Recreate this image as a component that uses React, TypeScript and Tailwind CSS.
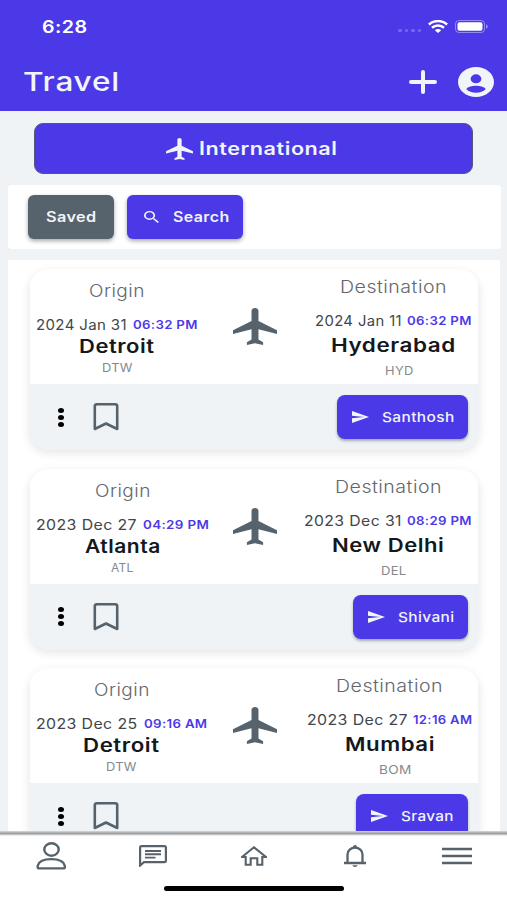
import React, { useLayoutEffect, useRef, useState } from "react";

interface Stop {
  label: string;
  labelWidth: number;
  date: string;
  dateWidth: number;
  time: string;
  timeWidth: number;
  city: string;
  cityWidth: number;
  code: string;
  codeWidth: number;
}

interface Trip {
  id: number;
  origin: Stop;
  destination: Stop;
  traveler: string;
  travelerWidth: number;
}

const trips: Trip[] = [
  {
    id: 1,
    origin: {
      label: "Origin",
      labelWidth: 56,
      date: "2024 Jan 31",
      dateWidth: 91,
      time: "06:32 PM",
      timeWidth: 65,
      city: "Detroit",
      cityWidth: 76,
      code: "DTW",
      codeWidth: 31,
    },
    destination: {
      label: "Destination",
      labelWidth: 107,
      date: "2024 Jan 11",
      dateWidth: 87,
      time: "06:32 PM",
      timeWidth: 65,
      city: "Hyderabad",
      cityWidth: 125,
      code: "HYD",
      codeWidth: 29,
    },
    traveler: "Santhosh",
    travelerWidth: 72,
  },
  {
    id: 2,
    origin: {
      label: "Origin",
      labelWidth: 56,
      date: "2023 Dec 27",
      dateWidth: 101,
      time: "04:29 PM",
      timeWidth: 66,
      city: "Atlanta",
      cityWidth: 76,
      code: "ATL",
      codeWidth: 23,
    },
    destination: {
      label: "Destination",
      labelWidth: 107,
      date: "2023 Dec 31",
      dateWidth: 98,
      time: "08:29 PM",
      timeWidth: 65,
      city: "New Delhi",
      cityWidth: 112,
      code: "DEL",
      codeWidth: 26,
    },
    traveler: "Shivani",
    travelerWidth: 56,
  },
  {
    id: 3,
    origin: {
      label: "Origin",
      labelWidth: 56,
      date: "2023 Dec 25",
      dateWidth: 102,
      time: "09:16 AM",
      timeWidth: 63,
      city: "Detroit",
      cityWidth: 77,
      code: "DTW",
      codeWidth: 31,
    },
    destination: {
      label: "Destination",
      labelWidth: 107,
      date: "2023 Dec 27",
      dateWidth: 101,
      time: "12:16 AM",
      timeWidth: 59,
      city: "Mumbai",
      cityWidth: 90,
      code: "BOM",
      codeWidth: 33,
    },
    traveler: "Sravan",
    travelerWidth: 53,
  },
];

// Stretches a line of text horizontally so it fills the given width
function WideText({
  width,
  className = "",
  children,
}: {
  width: number;
  className?: string;
  children: string;
}) {
  const ref = useRef<HTMLSpanElement>(null);
  const [scale, setScale] = useState(1);

  useLayoutEffect(() => {
    if (ref.current) setScale(width / ref.current.offsetWidth);
  }, [width, children]);

  return (
    <span
      className={`block shrink-0 whitespace-nowrap text-left tracking-wide ${className}`}
      style={{ width }}
    >
      <span
        ref={ref}
        className="inline-block origin-left"
        style={{ transform: `scaleX(${scale})` }}
      >
        {children}
      </span>
    </span>
  );
}

function PlaneIcon({ className }: { className: string }) {
  return (
    <svg viewBox="2 2 19 20" preserveAspectRatio="none" fill="currentColor" className={className}>
      <path d="M21 16v-2l-8-5V3.500c0-.83-.67-1.500-1.500-1.500S10 2.670 10 3.500V9l-8 5v2l8-2.500V19l-2 1.500V22l3.500-1 3.500 1v-1.500L13 19v-5.500l8 2.500z" />
    </svg>
  );
}

function StatusBar() {
  return (
    <div className="flex h-[52px] items-center pl-[42px] pr-[19px] text-white">
      <WideText width={45} className="pt-px text-[17px] font-semibold leading-[52px]">
        6:28
      </WideText>
      <div className="ml-auto flex items-center">
        <div className="mr-[7px] mt-[9px] flex gap-[3px]">
          {[0, 1, 2, 3].map((n) => (
            <span key={n} className="h-[3px] w-[3.5px] rounded-full bg-white/25" />
          ))}
        </div>
        <svg
          viewBox="0 0 20 13"
          className="mr-[7px] h-[13px] w-[20px]"
          fill="none"
          stroke="currentColor"
          strokeWidth="2.5"
        >
          <path d="M.9 4.500C6-.1 14-.1 19.100 4.500" />
          <path d="M4 7.800c3.500-3 8.500-3 12 0" />
          <path d="M6.800 10.200C8.600 8.600 11.400 8.600 13.200 10.200L10 13Z" fill="currentColor" stroke="none" />
        </svg>
        <svg viewBox="0 0 33 13" className="h-[13px] w-[33px]">
          <rect x=".5" y=".5" width="29" height="12" rx="3.500" fill="none" stroke="white" strokeOpacity=".4" />
          <rect x="2.500" y="2.200" width="25" height="8.600" rx="2" fill="white" />
          <path d="M31 4.300c2.300.8 2.300 3.600 0 4.400z" fill="white" fillOpacity=".45" />
        </svg>
      </div>
    </div>
  );
}

function Header() {
  return (
    <header className="h-[111px] shrink-0 bg-[#4b39e8]">
      <StatusBar />
      <div className="flex h-[59px] items-center pl-[23px] pr-[13px] text-[#f1f4f8]">
        <WideText width={97} className="text-[26px] font-medium leading-[59px]">
          Travel
        </WideText>
        <svg
          viewBox="0 0 28 24"
          className="ml-auto mr-[21px] h-6 w-7"
          stroke="currentColor"
          strokeWidth="4"
          strokeLinecap="round"
        >
          <path d="M2 12h24M14 2v20" />
        </svg>
        <svg viewBox="2 2 20 20" preserveAspectRatio="none" fill="currentColor" className="h-[30px] w-9">
          <path d="M12 2C6.480 2 2 6.480 2 12s4.480 10 10 10 10-4.480 10-10S17.520 2 12 2zm0 4.900a3 3 0 1 1 0 6 3 3 0 0 1 0-6zm0 12.300c-2.300 0-4.200-.8-5.300-2.300-.1-1.500 3.200-2.400 5.300-2.400s5.400.9 5.300 2.400c-1.100 1.500-3 2.300-5.300 2.300z" />
        </svg>
      </div>
    </header>
  );
}

function StopColumn({ stop, right = false }: { stop: Stop; right?: boolean }) {
  return (
    <div className={`flex flex-col items-center ${right ? "pt-[8px]" : "pt-[12px]"}`}>
      <WideText width={stop.labelWidth} className="text-[17px] font-light leading-5 text-[#62686d]">
        {stop.label}
      </WideText>
      <div className={`mt-[14px] flex ${right ? "gap-[5px]" : "gap-[6px]"}`}>
        <WideText width={stop.dateWidth} className="text-[14px] leading-5 text-[#42464a]">
          {stop.date}
        </WideText>
        <WideText width={stop.timeWidth} className="text-[12px] font-semibold leading-5 text-[#4b39e8]">
          {stop.time}
        </WideText>
      </div>
      <WideText
        width={stop.cityWidth}
        className={`text-[18.500px] font-semibold leading-[22px] text-[#14181b] ${right ? "mt-[3px]" : ""}`}
      >
        {stop.city}
      </WideText>
      <WideText
        width={stop.codeWidth}
        className={`text-[12px] leading-4 text-[#85898d] ${right ? "ml-[11px] mt-[7px]" : "mt-[3px]"}`}
      >
        {stop.code}
      </WideText>
    </div>
  );
}

function TripCard({ trip }: { trip: Trip }) {
  return (
    <article className="h-[181px] shrink-0 overflow-hidden rounded-[20px] bg-[#eff3f6] shadow-[0_3px_10px_rgba(0,0,0,0.1)]">
      <div className="mx-px flex h-[115px] justify-between bg-white pl-[6px] pr-[6px]">
        <StopColumn stop={trip.origin} />
        <StopColumn stop={trip.destination} right />
      </div>
      <div className="flex h-[66px] items-center pl-[29px] pr-[11px]">
        <div className="flex flex-col gap-[2px]">
          {[0, 1, 2].map((n) => (
            <span key={n} className="h-[5px] w-[6px] rounded-[50%] bg-black" />
          ))}
        </div>
        <svg
          viewBox="0 0 26 28"
          className="ml-[29px] h-7 w-[26px]"
          fill="none"
          stroke="#57636c"
          strokeWidth="2.600"
          strokeLinejoin="round"
        >
          <path d="M1.800 26V3q0-1.700 2-1.700h18.400q2 0 2 1.700v23L13 20.500z" />
        </svg>
        <button className="ml-auto flex h-11 items-center rounded-lg bg-[#4b39e8] pl-[15px] pr-[14px] text-[#f1f4f8] shadow-[0_2px_3px_rgba(0,0,0,0.3)]">
          <svg viewBox="2 3 21 18" preserveAspectRatio="none" fill="currentColor" className="mr-[13px] h-3 w-[17px]">
            <path d="M2.010 21L23 12 2.010 3 2 10l15 2-15 2z" />
          </svg>
          <WideText width={trip.travelerWidth} className="text-[13.500px] font-medium leading-5">
            {trip.traveler}
          </WideText>
        </button>
      </div>
    </article>
  );
}

function BottomNav() {
  return (
    <nav className="flex h-[69px] shrink-0 flex-col bg-white">
      <div className="h-[5px] shrink-0 bg-linear-to-b from-[#d8dbde] via-[#9a9da0] to-white" />
      <div className="flex h-[40px] items-center justify-between pl-[36px] pr-[35px] text-[#57636c]">
        <svg viewBox="0 0 30 28" className="h-7 w-[30px]" fill="none" stroke="currentColor" strokeWidth="2.400">
          <ellipse cx="15.500" cy="7.500" rx="7.200" ry="6.200" />
          <path d="M1.700 25.200v-1.500c1-4.700 7-6.600 13.600-6.600s12.500 1.900 13.500 6.600v1.500q0 1.200-1.500 1.200H3.200q-1.500 0-1.500-1.200z" />
        </svg>
        <svg viewBox="0 0 28 22" className="-ml-[2px] mr-[2px] h-[22px] w-7" fill="none" stroke="currentColor" strokeWidth="2.200">
          <path d="M1.100 20.500V2.300q0-1.100 1.500-1.100h22.800q1.500 0 1.500 1.100v13.800q0 1.100-1.500 1.100H5z" />
          <path d="M6 6h16M6 9.300h16M6 12.600h10.500" strokeWidth="1.900" />
        </svg>
        <svg viewBox="0 0 26 20" className="-ml-[4px] mr-[3px] h-5 w-[26px]" fill="none" stroke="currentColor" strokeWidth="2.100">
          <path d="M1 11L13 1.300 25 11h-3.700v7.800h-5V12.200H9.700v6.600h-5V11z" />
        </svg>
        <svg viewBox="0 0 22 22" className="-ml-px mr-px h-[22px] w-[22px]" fill="none" stroke="currentColor" strokeWidth="2.300">
          <path d="M0 18h22M3.500 18V9.500c0-4 3.300-6.800 7.500-6.800s7.500 2.800 7.500 6.800V18" />
          <ellipse cx="11" cy="1.700" rx="2" ry="1.600" fill="currentColor" stroke="none" />
          <path d="M8.300 20.300h5.400q-.6 1.700-2.700 1.700t-2.700-1.700z" fill="currentColor" stroke="none" />
        </svg>
        <svg viewBox="0 0 30 18" className="h-[18px] w-[30px]" stroke="currentColor" strokeWidth="2.300">
          <path d="M0 2h30M0 9h30M0 16h30" />
        </svg>
      </div>
      <div className="ml-[164px] mt-[9.500px] h-[5.500px] w-[180px] rounded-full bg-black" />
    </nav>
  );
}

export default function App() {
  return (
    <div className="flex h-[900px] w-[507px] flex-col overflow-hidden bg-[#eff3f6] font-['Inter','Liberation_Sans',sans-serif]">
      <Header />

      <main className="flex min-h-0 flex-1 flex-col overflow-hidden">
        <button className="mx-[34px] mt-3 flex h-[51px] w-[439px] shrink-0 items-center justify-center gap-[6px] rounded-[9px] border border-[#57557f] bg-[#4b39e8] pr-[4px] text-[#f1f4f8]">
          <PlaneIcon className="h-[22px] w-[27px]" />
          <WideText width={138} className="text-[18px] font-semibold leading-6">
            International
          </WideText>
        </button>

        <div className="mx-2 mt-[11px] flex h-16 w-[493px] shrink-0 items-center gap-[13px] rounded-sm bg-white pl-5">
          <button className="flex h-11 w-[86px] items-center justify-center rounded-md bg-[#57636c] text-[#f1f4f8] shadow-[0_2px_4px_rgba(0,0,0,0.35)]">
            <WideText width={51} className="text-[14px] font-semibold leading-5">
              Saved
            </WideText>
          </button>
          <button className="flex h-11 w-[116px] items-center rounded-md bg-[#4b39e8] pl-[17px] text-[#f1f4f8] shadow-[0_2px_4px_rgba(0,0,0,0.35)]">
            <svg viewBox="3 3 17.500 17.500" preserveAspectRatio="none" fill="currentColor" className="mr-[14px] h-3 w-[15px]">
              <path d="M15.500 14h-.79l-.28-.27A6.471 6.471 0 0 0 16 9.500 6.500 6.500 0 1 0 9.500 16c1.610 0 3.090-.59 4.230-1.570l.27.28v.79l5 4.990L20.490 19l-4.990-5zm-6 0C7.010 14 5 11.990 5 9.500S7.010 5 9.500 5 14 7.010 14 9.500 11.990 14 9.500 14z" />
            </svg>
            <WideText width={57} className="text-[14px] font-semibold leading-5">
              Search
            </WideText>
          </button>
        </div>

        <section className="mx-2 mt-[11px] flex min-h-0 w-[492px] flex-1 flex-col gap-[18.500px] overflow-hidden bg-white pl-[21px] pr-[21px] pt-[9px]">
          {trips.map((trip) => (
            <div key={trip.id} className="relative shrink-0">
              <TripCard trip={trip} />
              <PlaneIcon className="absolute left-[204px] top-[39px] h-[37px] w-[44px] text-[#57636c]" />
            </div>
          ))}
        </section>
      </main>

      <BottomNav />
    </div>
  );
}
